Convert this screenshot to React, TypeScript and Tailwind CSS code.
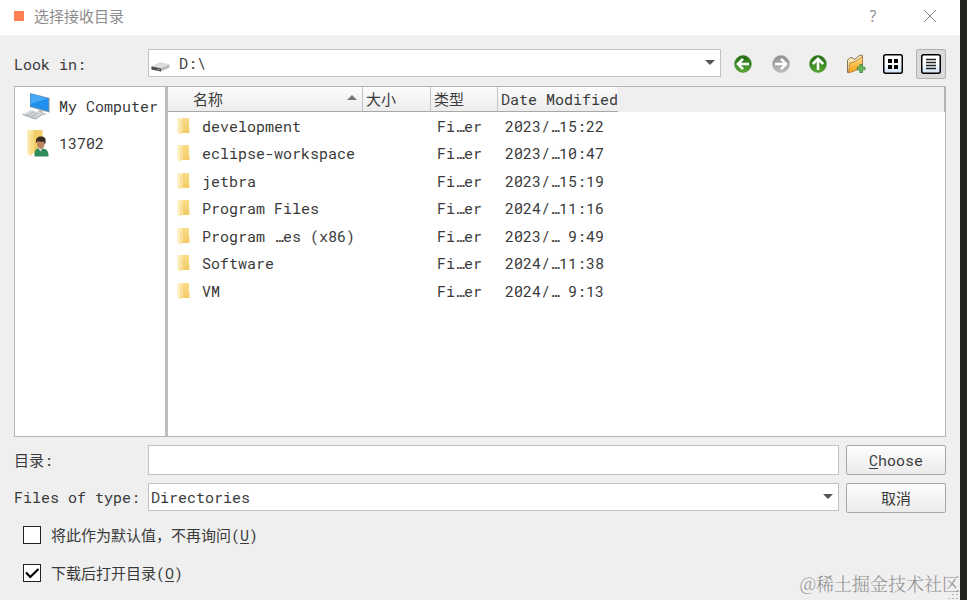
import { useState } from "react";
import type { ReactNode } from "react";

type Entry = { name: string; type: string; date: string };

const entries: Entry[] = [
  { name: "development", type: "Fi…er", date: "2023/…15:22" },
  { name: "eclipse-workspace", type: "Fi…er", date: "2023/…10:47" },
  { name: "jetbra", type: "Fi…er", date: "2023/…15:19" },
  { name: "Program Files", type: "Fi…er", date: "2024/…11:16" },
  { name: "Program …es (x86)", type: "Fi…er", date: "2023/… 9:49" },
  { name: "Software", type: "Fi…er", date: "2024/…11:38" },
  { name: "VM", type: "Fi…er", date: "2024/… 9:13" },
];

function FolderIcon() {
  return (
    <svg width="13" height="18" viewBox="0 0 13 18" className="block">
      <defs>
        <linearGradient id="fold" x1="0" y1="0" x2="0" y2="1">
          <stop offset="0" stopColor="#f9dc88" />
          <stop offset="1" stopColor="#f3cb66" />
        </linearGradient>
      </defs>
      <path d="M4 1h8v9.500h.5V16H4z" fill="url(#fold)" />
      <path d="M0.500 1H5l1 1v12.500L3 17.500 0.500 15.500z" fill="#fdedb8" />
      <path d="M3 4 6 2v13L3 17.500z" fill="#fae09a" />
    </svg>
  );
}

function DriveIcon() {
  return (
    <svg width="19" height="10" viewBox="0 0 19 10" className="block">
      <path d="M0.5 4.5 9 0.5 18.5 2.5v3L10 9.5 0.5 7.5z" fill="#b9b9b9" />
      <path d="M0.5 4.2 9 0.5l9.5 2L10 6.2z" fill="#dedede" />
      <path d="M0.5 4.4 10 6.4v3.1L0.5 7.6z" fill="#4c4c4c" />
      <path d="M6.5 7h2v1h-2z" fill="#8fd08f" />
    </svg>
  );
}

function ComputerIcon() {
  return (
    <svg width="28" height="28" viewBox="0 0 28 28" className="block">
      <path d="M8 1 27.500 6v14.500L8 15z" fill="#6d90aa" />
      <path d="M8.600 1.800 26.300 6.500v12.300L8.600 14.200z" fill="#1e90ee" />
      <path d="M8.600 1.800 26.300 6.500 8.600 12z" fill="#45a9f6" />
      <path d="m17 17.500 4 1v2.500l4 .8-2.500 1.500-7-2z" fill="#b9c0c5" />
      <path d="m0.500 22 8.500-4 12 3.500-7.500 5z" fill="#e4e6e9" />
      <path d="m3 22.200 11 3M5.500 21l11 3.200M8 19.600l11 3M5 23.300l7-4M9.500 24.600l6.500-4" stroke="#a9aeb4" strokeWidth="0.7" />
      <path d="m0.500 22 13 4.200 7.500-4.700v1l-7.500 5L0.500 23z" fill="#9ea4aa" />
    </svg>
  );
}

function UserIcon() {
  return (
    <svg width="22" height="28" viewBox="0 0 22 28" className="block">
      <path d="M4 1h11.500v23H4z" fill="#f3cd68" />
      <path d="M0.500 1H5l2 1.500V23l-3.500 4-3-2.500z" fill="#fbe7a4" />
      <path d="M3.500 5 7 2.500V23l-3.500 4z" fill="#f8d985" />
      <path d="M7.500 27.500c-.5-5 1-7.500 4-8.500l6.500 1c2.500 1 3.500 3 3.500 7.500z" fill="#2f8a5c" />
      <path d="m11 19 2.500 3.500 2.500-4z" fill="#e8e8e8" />
      <path d="M10 10.500h7.500V15c0 2.800-1.500 5-3.500 5s-4-2.500-4-5z" fill="#bd8763" />
      <path d="M9 13c-.5-4 2-5.500 5-5.500s5.500 1.200 4.500 6.500l-1 1.500-.5-3c-2 .5-5 0-6.500-.5l-1 2z" fill="#3a2a24" />
    </svg>
  );
}

function Orb({ gray, angle }: { gray?: boolean; angle: 0 | 90 | 180 }) {
  const id = `orb${angle}`;
  return (
    <svg width="18" height="18" viewBox="0 0 18 18">
      <defs>
        <linearGradient id={id} x1="0" y1="0" x2="0" y2="1">
          <stop offset="0" stopColor={gray ? "#8f8f8f" : "#236a16"} />
          <stop offset="1" stopColor={gray ? "#bdbdbd" : "#56a832"} />
        </linearGradient>
      </defs>
      <circle cx="9" cy="9" r="8.400" fill={`url(#${id})`} stroke={gray ? "#a5a5a5" : "#3b8428"} strokeWidth="0.6" />
      <g transform={`rotate(${angle} 9 9)`} fill="none" stroke="#fff" strokeWidth="2.600">
        <path d="M15 9H4.500" />
        <path d="M9 3.800 3.900 9 9 14.200" />
      </g>
    </svg>
  );
}

function NewFolderIcon() {
  return (
    <svg width="20" height="20" viewBox="0 0 20 20">
      <defs>
        <linearGradient id="nf" x1="0" y1="0" x2="0" y2="1">
          <stop offset="0" stopColor="#ffdc8a" />
          <stop offset="1" stopColor="#f59d10" />
        </linearGradient>
      </defs>
      <path d="M1.500 18.500V6l3-2.500 2.500.5L8.500 5.500 14 1l2.500.5V13z" fill="#fbe7b8" stroke="#7b6848" strokeWidth="0.9" />
      <path d="M2.500 19 3.500 9l5.500-1.500L16.500 2.500V13.500L7 17.500z" fill="url(#nf)" stroke="#9a7433" strokeWidth="0.7" />
      <path d="M13.800 10.500h2.600v2.700H19v2.600h-2.600v2.700h-2.600v-2.700h-2.600v-2.600h2.600z" fill="#6dbb5e" stroke="#3c8341" strokeWidth="0.8" />
    </svg>
  );
}

function ViewIcon({ list }: { list?: boolean }) {
  const id = list ? "vl" : "vi";
  return (
    <svg width="20" height="20" viewBox="0 0 20 20">
      <defs>
        <linearGradient id={id} x1="0" y1="0" x2="0" y2="1">
          <stop offset="0.4" stopColor="#ffffff" />
          <stop offset="1" stopColor="#cfe3f8" />
        </linearGradient>
      </defs>
      <rect x="0.750" y="0.750" width="18.500" height="18.500" rx="2" fill={`url(#${id})`} stroke="#000" strokeWidth="1.500" />
      {list ? (
        <path d="M5 5.500h10M5 8.500h10M5 11.500h10M5 14.500h10" stroke="#222" strokeWidth="1.600" />
      ) : (
        <path d="M5 5h4v4H5zM11 5h4v4h-4zM5 11h4v4H5zM11 11h4v4h-4z" fill="#000" />
      )}
    </svg>
  );
}

function ToolButton({ label, active, children }: { label: string; active?: boolean; children: ReactNode }) {
  return (
    <button
      type="button"
      aria-label={label}
      className={
        active
          ? "flex size-[30px] items-center justify-center rounded-xs border border-[#b0b0b0] bg-[#dadada]"
          : "flex size-[30px] items-center justify-center"
      }
    >
      {children}
    </button>
  );
}

function Arrow() {
  return (
    <svg width="10" height="5" viewBox="0 0 10 5" className="pointer-events-none absolute top-[11px] right-[6px]">
      <path d="M0 0h10L5 5z" fill="#555" />
    </svg>
  );
}

function PushButton({ children }: { children: ReactNode }) {
  return (
    <button
      type="button"
      className="block h-[30px] w-[100px] shrink-0 rounded-xs border border-[#a6a6a6] bg-linear-to-b from-[#fdfdfd] to-[#ebebeb] text-center"
    >
      {children}
    </button>
  );
}

function CheckRow({ id, initial, children }: { id: string; initial: boolean; children: ReactNode }) {
  const [on, setOn] = useState(initial);
  return (
    <div className="flex h-[18px] items-center gap-[10px]">
      <span className="relative size-[18px]">
        <input
          id={id}
          type="checkbox"
          checked={on}
          onChange={() => setOn(!on)}
          className="block size-[18px] appearance-none border border-[#222] bg-white"
        />
        {on && (
          <svg width="18" height="18" viewBox="0 0 18 18" className="pointer-events-none absolute inset-0">
            <path d="m3 8.500 4.300 4.500L15.500 5" fill="none" stroke="#000" strokeWidth="2.200" />
          </svg>
        )}
      </span>
      <label htmlFor={id}>{children}</label>
    </div>
  );
}

const headCell =
  "border-r border-b border-r-[#c4c4c4] border-b-[#a8a8a8] bg-linear-to-b from-[#fcfcfc] to-[#ececec] p-0 pl-[3px] text-left font-normal whitespace-nowrap";

export default function App() {
  return (
    <div className="flex min-h-screen bg-[#22231f] font-['Roboto_Mono','Liberation_Mono','Noto_Sans_CJK_SC',monospace] text-[15px] leading-[20px] text-[#3a3a3a]">
      <div className="relative mr-[7px] flex min-w-0 flex-1 flex-col bg-[#efefef]">
        <header className="flex h-[35px] items-center bg-white pr-[23px] pb-[3px] pl-[14px] text-[#8c8c8c]">
          <span className="size-[10px] bg-[#ff7f50]" />
          <h1 className="ml-[10px] flex-1">选择接收目录</h1>
          <button type="button" className="w-4 text-center font-['Open_Sans','Noto_Sans',sans-serif] text-[16px]">
            ?
          </button>
          <button type="button" aria-label="Close" className="ml-[42px]">
            <svg width="14" height="14" viewBox="0 0 14 14">
              <path d="m1 1 12 12M13 1 1 13" stroke="#8a8a8a" strokeWidth="1" />
            </svg>
          </button>
        </header>

        <main className="flex flex-1 flex-col px-[14px] pt-[14px] pb-[18px]">
          <div className="flex h-[30px] items-start">
            <label htmlFor="look" className="w-[134px] shrink-0 leading-[30px]">
              Look in:
            </label>
            <div className="relative flex-1">
              <select
                id="look"
                className="block h-[28px] w-full appearance-none border border-[#c0c0c0] bg-white pl-[30px]"
              >
                <option>{"D:\\"}</option>
              </select>
              <span className="pointer-events-none absolute top-[13px] left-[3px]">
                <DriveIcon />
              </span>
              <Arrow />
            </div>
            <div className="ml-[7px] flex w-[218px] shrink-0 justify-between">
              <ToolButton label="Back">
                <Orb angle={0} />
              </ToolButton>
              <ToolButton label="Forward">
                <Orb angle={180} gray />
              </ToolButton>
              <ToolButton label="Parent Directory">
                <Orb angle={90} />
              </ToolButton>
              <ToolButton label="Create New Folder">
                <NewFolderIcon />
              </ToolButton>
              <ToolButton label="List View">
                <ViewIcon />
              </ToolButton>
              <ToolButton label="Detail View" active>
                <ViewIcon list />
              </ToolButton>
            </div>
          </div>

          <div className="mt-[7px] flex flex-1 border border-[#b4b4b4] bg-white">
            <ul className="w-[150px] shrink-0">
              <li className="flex h-[37px] items-center">
                <span className="ml-[7px] w-[37px]">
                  <ComputerIcon />
                </span>
                My Computer
              </li>
              <li className="flex h-[37px] items-center">
                <span className="w-[44px] pl-[12px]">
                  <UserIcon />
                </span>
                13702
              </li>
            </ul>
            <div className="w-[3px] shrink-0 bg-[#bcbcbc]" />
            <div className="min-w-0 flex-1">
              <table className="w-full table-fixed border-separate border-spacing-0">
                <thead>
                  <tr className="h-[25px]">
                    <th className={`${headCell} w-[195px]`}>
                      <span className="flex items-center justify-between pr-[5px] pl-[22px]">
                        名称
                        <svg width="10" height="5" viewBox="0 0 10 5" className="mb-1">
                          <path d="M0 5h10L5 0z" fill="#777" />
                        </svg>
                      </span>
                    </th>
                    <th className={`${headCell} w-[68px]`}>大小</th>
                    <th className={`${headCell} w-[67px]`}>类型</th>
                    <th className="w-[120px] border-b border-[#a8a8a8] bg-linear-to-b from-[#fcfcfc] to-[#ececec] p-0 pl-[3px] text-left font-normal whitespace-nowrap">
                      Date Modified
                    </th>
                    <td className="border-r border-[#b4b4b4] bg-[#efefef] p-0" />
                  </tr>
                </thead>
                <tbody>
                  {entries.map((e) => (
                    <tr key={e.name} className="odd:h-[27px] even:h-[28px]">
                      <td className="p-0">
                        <span className="flex items-center gap-[12px] pl-[9px] whitespace-pre">
                          <FolderIcon />
                          {e.name}
                        </span>
                      </td>
                      <td className="p-0" />
                      <td className="p-0 pl-[6px]">{e.type}</td>
                      <td className="p-0 pl-[7px] whitespace-pre">{e.date}</td>
                      <td className="p-0" />
                    </tr>
                  ))}
                </tbody>
              </table>
            </div>
          </div>

          <div className="mt-2 flex">
            <label htmlFor="dir" className="w-[134px] shrink-0 leading-[30px]">
              目录:
            </label>
            <input
              id="dir"
              type="text"
              className="h-[30px] min-w-0 flex-1 border border-[#c0c0c0] bg-white px-[3px]"
            />
            <span className="ml-[7px]">
              <PushButton>
                <u className="underline-offset-2">C</u>hoose
              </PushButton>
            </span>
          </div>

          <div className="mt-2 flex items-start">
            <label htmlFor="kind" className="w-[134px] shrink-0 leading-[28px]">
              Files of type:
            </label>
            <div className="relative flex-1">
              <select
                id="kind"
                className="block h-[28px] w-full appearance-none border border-[#c0c0c0] bg-white pl-[2px]"
              >
                <option>Directories</option>
              </select>
              <Arrow />
            </div>
            <span className="ml-[7px]">
              <PushButton>取消</PushButton>
            </span>
          </div>

          <div className="mt-[13px] flex flex-col gap-5 pl-[9px]">
            <CheckRow id="default" initial={false}>
              将此作为默认值，不再询问(<u className="underline-offset-2">U</u>)
            </CheckRow>
            <CheckRow id="open" initial>
              下载后打开目录(<u className="underline-offset-2">O</u>)
            </CheckRow>
          </div>
        </main>

        <svg width="12" height="10" viewBox="0 0 12 10" className="absolute right-[1px] bottom-0">
          <path
            d="M9 1h2v1H9zM5 4h2v1H5zM9 4h2v1H9zM1 8h2v1H1zM5 8h2v1H5zM9 8h2v1H9z"
            fill="#b5b5b5"
          />
        </svg>
        <p className="absolute right-0 bottom-[6px] font-['Noto_Serif_CJK_SC','Noto_Sans_CJK_SC',serif] text-[18px] leading-[22px] font-light whitespace-nowrap text-[#8e8e8e]">
          @稀土掘金技术社区
        </p>
      </div>
    </div>
  );
}
